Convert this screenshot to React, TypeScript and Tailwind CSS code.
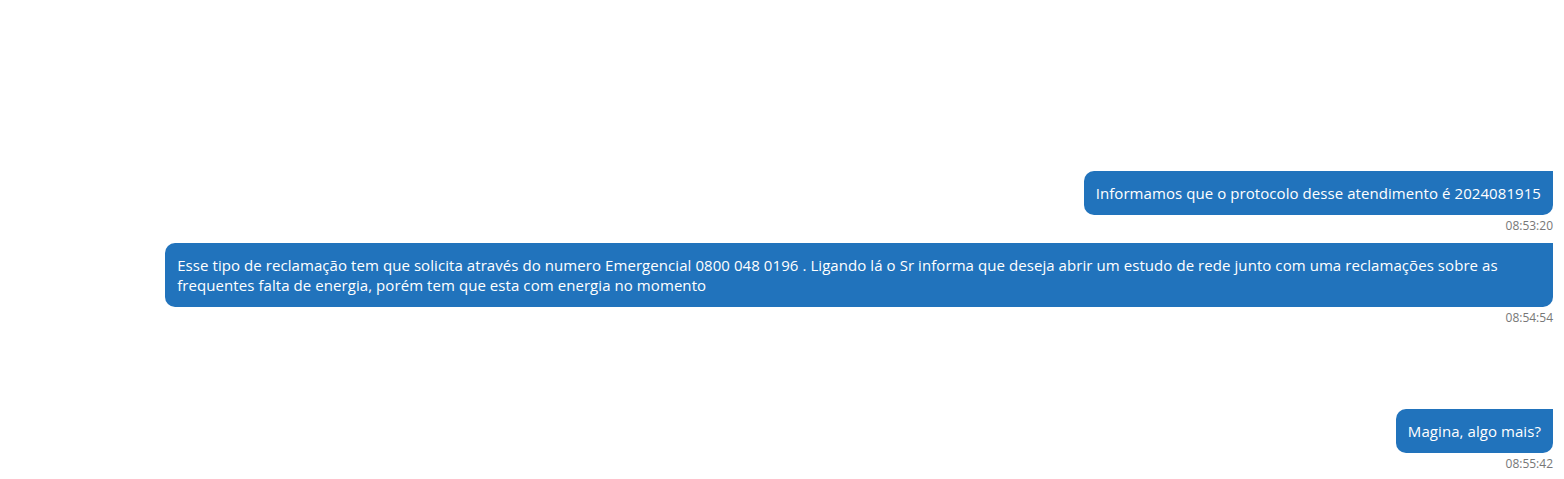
const messages = [
  { text: "Informamos que o protocolo desse atendimento é 2024081915", time: "08:53:20", gap: "mt-[171px]" },
  {
    text: "Esse tipo de reclamação tem que solicita através do numero Emergencial 0800 048 0196 . Ligando lá o Sr informa que deseja abrir um estudo de rede junto com uma reclamações sobre as frequentes falta de energia, porém tem que esta com energia no momento",
    time: "08:54:54",
    gap: "mt-[10px]",
  },
  { text: "Magina, algo mais?", time: "08:55:42", gap: "mt-[84px]" },
];

export default function App() {
  return (
    <div className="min-h-screen bg-white px-[11px] font-['Open_Sans',sans-serif]">
      <div className="flex flex-col">
        {messages.map((m) => (
          <div key={m.time} className={`flex flex-col items-end ${m.gap}`}>
            <div className="max-w-[90%] rounded-[10px] rounded-tr-none bg-[#2173bc] px-3 py-3 text-[15px] leading-[20px] tracking-[0.07px] text-white">
              {m.text}
            </div>
            <span className="mt-1 text-[12px] leading-[14px] text-[#777]">{m.time}</span>
          </div>
        ))}
      </div>
    </div>
  );
}
